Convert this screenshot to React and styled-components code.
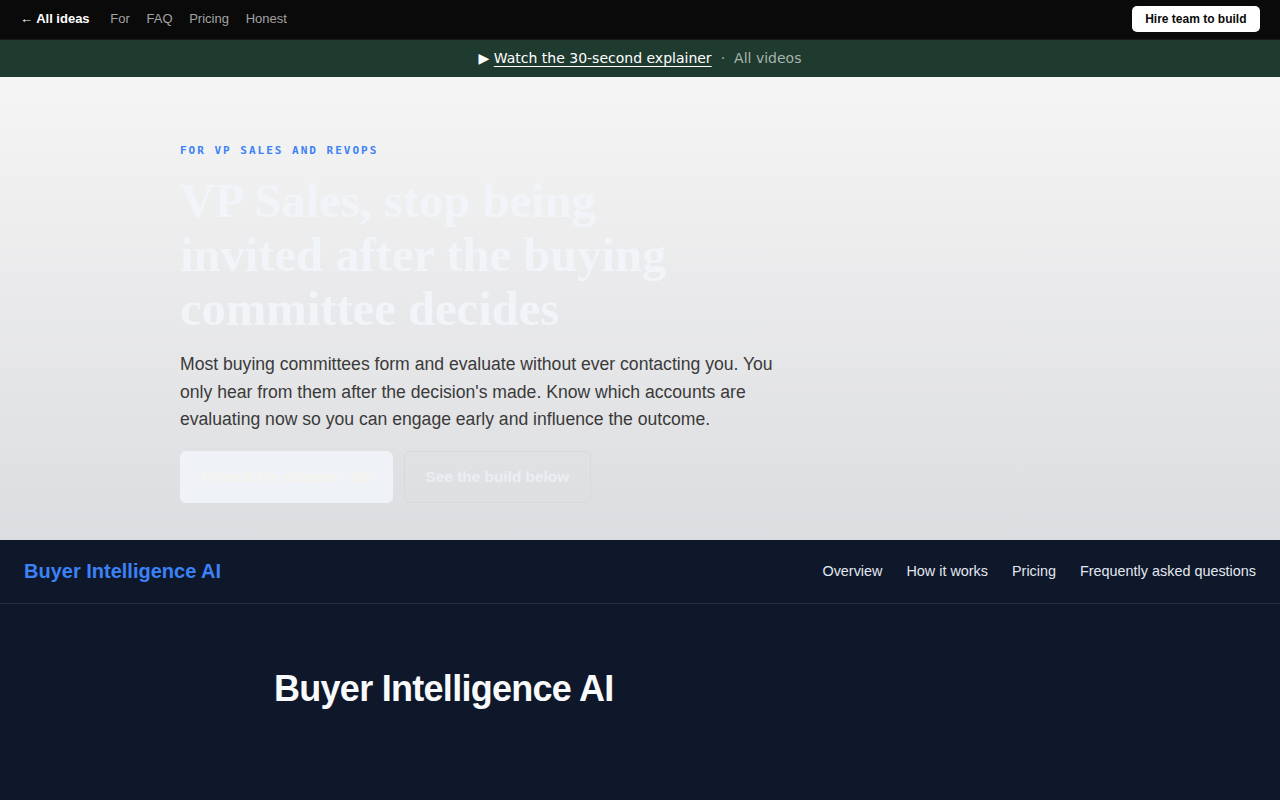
import React from 'react';
import styled, { createGlobalStyle } from 'styled-components';

const GlobalStyle = createGlobalStyle`
  * { box-sizing: border-box; }
  body {
    margin: 0;
    background: #0f172a;
    font-family: "Liberation Sans", Arial, sans-serif;
  }
  a { text-decoration: none; color: inherit; }
`;

const TopBar = styled.header`
  height: 40px;
  background: #0a0a0a;
  border-bottom: 1px solid #1a1a1a;
  display: flex;
  align-items: center;
  justify-content: space-between;
  padding: 0 20px 2px;
  font-size: 13px;
`;

const TopLinks = styled.nav`
  display: flex;
  align-items: center;
  gap: 16.7px;
`;

const TopLink = styled.a`
  color: ${p => (p.$strong ? '#ffffff' : '#a3a3a3')};
  font-weight: ${p => (p.$strong ? 700 : 400)};
  margin-right: ${p => (p.$strong ? '4px' : '0')};
`;

const HireButton = styled.a`
  background: #ffffff;
  color: #0a0a0a;
  font-weight: 700;
  font-size: 12px;
  padding: 6px 13.5px;
  border-radius: 5px;
`;

const Banner = styled.div`
  height: 37px;
  background: #1f3b2f;
  display: flex;
  align-items: center;
  justify-content: center;
  gap: 9px;
  padding-bottom: 1px;
  font-family: "DejaVu Sans", sans-serif;
  font-size: 14px;
  color: #a8b3ad;
`;

const PlayMark = styled.span`
  color: #ffffff;
`;

const BannerLink = styled.a`
  color: #ffffff;
  text-decoration: underline;
  text-underline-offset: 3px;
`;

const Hero = styled.section`
  height: 463px;
  background: linear-gradient(180deg, #f5f5f5 0%, #dcdde0 100%);
  padding: 67px 180px 0;
`;

const Eyebrow = styled.div`
  font-family: "DejaVu Sans Mono", monospace;
  font-weight: 700;
  font-size: 11px;
  letter-spacing: 2px;
  color: #3b82f6;
  margin-bottom: 17px;
`;

const Headline = styled.h1`
  margin: 0 0 15px;
  max-width: 520px;
  font-family: "Liberation Serif", "Times New Roman", serif;
  font-weight: 700;
  font-size: 48.6px;
  line-height: 54px;
  color: #f1f4f8;
`;

const Lede = styled.p`
  margin: 0 0 17px;
  max-width: 610px;
  font-size: 17.6px;
  line-height: 27.6px;
  color: #3a3a3a;
`;

const Actions = styled.div`
  display: flex;
  gap: 11px;
`;

const CtaButton = styled.a`
  display: flex;
  align-items: center;
  justify-content: center;
  height: 52px;
  padding: 0 21px;
  border-radius: 6px;
  font-size: 15.4px;
  font-weight: 700;
  background: ${p => (p.$primary ? '#eff3f8' : 'transparent')};
  color: ${p => (p.$primary ? '#f6f3ec' : '#eceef3')};
  border: 1px solid ${p => (p.$primary ? '#eff3f8' : '#d8d9dd')};
`;

const SiteNav = styled.nav`
  height: 64px;
  background: #0f172a;
  border-bottom: 1px solid #243042;
  display: flex;
  align-items: center;
  justify-content: space-between;
  padding: 0 24px 1px;
`;

const Brand = styled.a`
  color: #3b82f6;
  font-size: 20px;
  font-weight: 700;
`;

const NavLinks = styled.div`
  display: flex;
  gap: 24px;
`;

const NavLink = styled.a`
  color: #e2e8f0;
  font-size: 14.4px;
`;

const Main = styled.main`
  background: #0f172a;
  min-height: 200px;
  max-width: 732px;
  margin: 0 auto;
  padding: 64px 0 0;
`;

const Title = styled.h2`
  margin: 0;
  color: #f8fafc;
  font-size: 36px;
  font-weight: 700;
  letter-spacing: -0.72px;
`;

export default function App() {
  return (
    <>
      <GlobalStyle />
      <TopBar>
        <TopLinks>
          <TopLink $strong href="#">← All ideas</TopLink>
          <TopLink href="#">For</TopLink>
          <TopLink href="#">FAQ</TopLink>
          <TopLink href="#">Pricing</TopLink>
          <TopLink href="#">Honest</TopLink>
        </TopLinks>
        <HireButton href="#">Hire team to build</HireButton>
      </TopBar>
      <Banner>
        <span>
          <PlayMark>▶ </PlayMark>
          <BannerLink href="#">Watch the 30-second explainer</BannerLink>
        </span>
        <span>·</span>
        <a href="#">All videos</a>
      </Banner>
      <Hero>
        <Eyebrow>FOR VP SALES AND REVOPS</Eyebrow>
        <Headline>VP Sales, stop being invited after the buying committee decides</Headline>
        <Lede>
          Most buying committees form and evaluate without ever contacting you. You only hear
          from them after the decision's made. Know which accounts are evaluating now so you can
          engage early and influence the outcome.
        </Lede>
        <Actions>
          <CtaButton $primary href="#">Unlock the dossier · $5</CtaButton>
          <CtaButton href="#">See the build below</CtaButton>
        </Actions>
      </Hero>
      <SiteNav>
        <Brand href="#">Buyer Intelligence AI</Brand>
        <NavLinks>
          <NavLink href="#">Overview</NavLink>
          <NavLink href="#">How it works</NavLink>
          <NavLink href="#">Pricing</NavLink>
          <NavLink href="#">Frequently asked questions</NavLink>
        </NavLinks>
      </SiteNav>
      <Main>
        <Title>Buyer Intelligence AI</Title>
      </Main>
    </>
  );
}
